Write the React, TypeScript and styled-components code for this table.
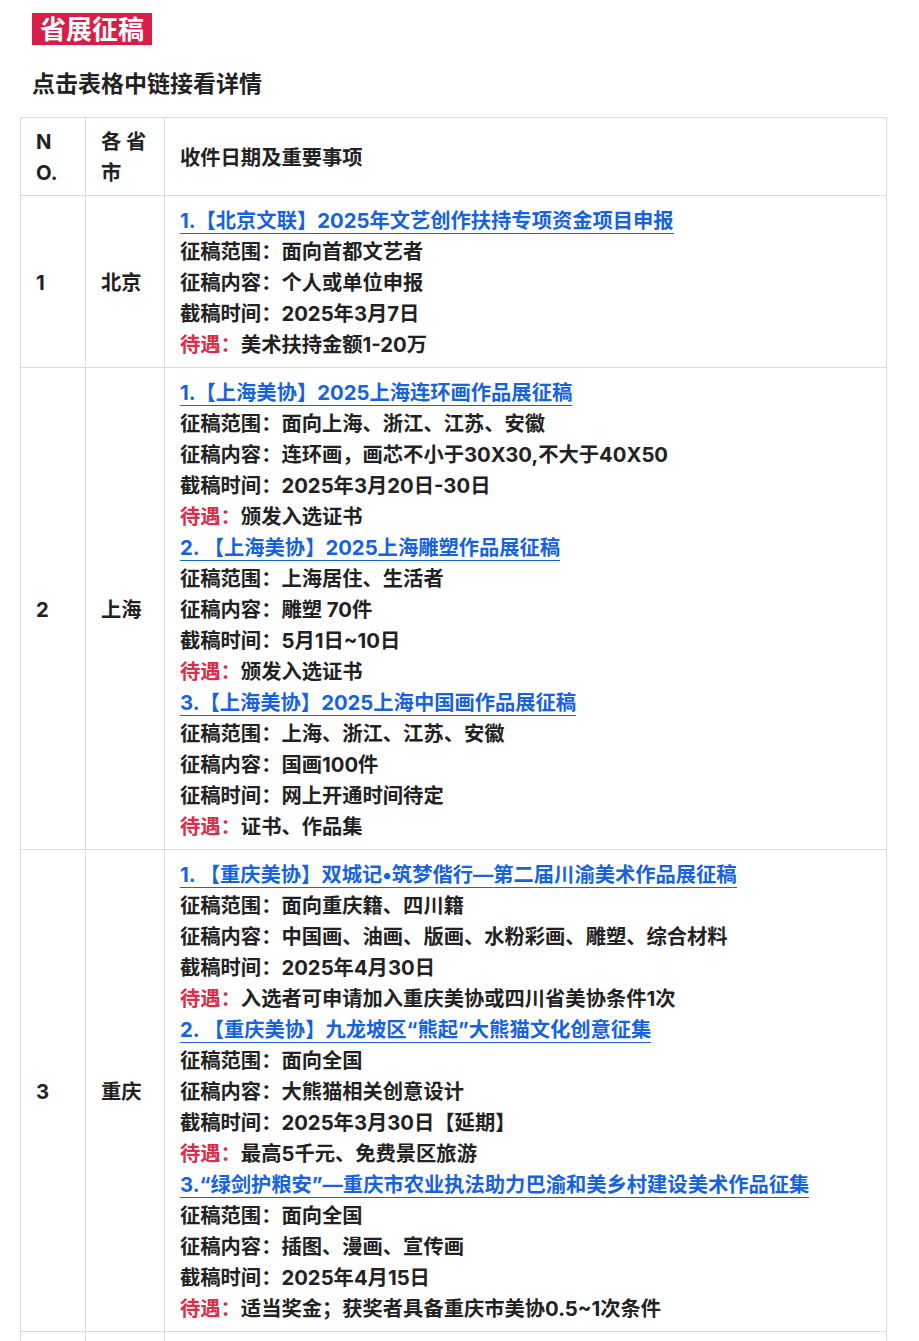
import React from 'react';
import styled, { createGlobalStyle } from 'styled-components';

const GlobalStyle = createGlobalStyle`
  body {
    margin: 0;
    background: #fff;
    font-family: 'Noto Sans', 'Noto Sans CJK SC', sans-serif;
    color: #222;
  }
`;

const Page = styled.div`
  padding: 13px 20px 0;
`;

const Badge = styled.h1`
  display: inline-block;
  margin: 0 0 0 12px;
  padding: 0 8px;
  height: 32px;
  line-height: 32px;
  background: #d81e48;
  color: #fff;
  font-size: 26px;
  font-weight: 700;
`;

const Subtitle = styled.h2`
  margin: 22px 0 0 12px;
  font-size: 23px;
  line-height: 32px;
  font-weight: 700;
  color: #222;
`;

const Table = styled.table`
  margin-top: 18px;
  width: 867px;
  border-collapse: collapse;
  table-layout: fixed;
  font-family: Inter, 'Noto Sans CJK SC', sans-serif;
  font-size: 20.3px;
  font-weight: 700;
  line-height: 31px;
`;

const Cell = styled.td<{ $w?: number; $head?: boolean }>`
  width: ${({ $w }) => ($w ? `${$w}px` : 'auto')};
  border: 1px solid #dcdcdc;
  padding: ${({ $head }) => ($head ? '8px 15px 7px' : '9px 15px 7px')};
  vertical-align: middle;
  text-align: left;
  box-sizing: border-box;
`;

const Line = styled.div`
  white-space: nowrap;
`;

const Link = styled.a`
  color: #1662e0;
  text-decoration: none;
  border-bottom: 1.5px solid #1662e0;
`;

const Label = styled.span`
  color: #d8304c;
`;

type Item = {
  title: string;
  lines: [string, string][];
};

type Row = { no: string; city: string; items: Item[] };

const rows: Row[] = [
  {
    no: '1',
    city: '北京',
    items: [
      {
        title: '1.【北京文联】2025年文艺创作扶持专项资金项目申报',
        lines: [
          ['征稿范围：', '面向首都文艺者'],
          ['征稿内容：', '个人或单位申报'],
          ['截稿时间：', '2025年3月7日'],
          ['待遇：', '美术扶持金额1-20万'],
        ],
      },
    ],
  },
  {
    no: '2',
    city: '上海',
    items: [
      {
        title: '1.【上海美协】2025上海连环画作品展征稿',
        lines: [
          ['征稿范围：', '面向上海、浙江、江苏、安徽'],
          ['征稿内容：', '连环画，画芯不小于30X30,不大于40X50'],
          ['截稿时间：', '2025年3月20日-30日'],
          ['待遇：', '颁发入选证书'],
        ],
      },
      {
        title: '2. 【上海美协】2025上海雕塑作品展征稿',
        lines: [
          ['征稿范围：', '上海居住、生活者'],
          ['征稿内容：', '雕塑 70件'],
          ['截稿时间：', '5月1日~10日'],
          ['待遇：', '颁发入选证书'],
        ],
      },
      {
        title: '3.【上海美协】2025上海中国画作品展征稿',
        lines: [
          ['征稿范围：', '上海、浙江、江苏、安徽'],
          ['征稿内容：', '国画100件'],
          ['征稿时间：', '网上开通时间待定'],
          ['待遇：', '证书、作品集'],
        ],
      },
    ],
  },
  {
    no: '3',
    city: '重庆',
    items: [
      {
        title: '1. 【重庆美协】双城记•筑梦偕行—第二届川渝美术作品展征稿',
        lines: [
          ['征稿范围：', '面向重庆籍、四川籍'],
          ['征稿内容：', '中国画、油画、版画、水粉彩画、雕塑、综合材料'],
          ['截稿时间：', '2025年4月30日'],
          ['待遇：', '入选者可申请加入重庆美协或四川省美协条件1次'],
        ],
      },
      {
        title: '2. 【重庆美协】九龙坡区“熊起”大熊猫文化创意征集',
        lines: [
          ['征稿范围：', '面向全国'],
          ['征稿内容：', '大熊猫相关创意设计'],
          ['截稿时间：', '2025年3月30日【延期】'],
          ['待遇：', '最高5千元、免费景区旅游'],
        ],
      },
      {
        title: '3.“绿剑护粮安”—重庆市农业执法助力巴渝和美乡村建设美术作品征集',
        lines: [
          ['征稿范围：', '面向全国'],
          ['征稿内容：', '插图、漫画、宣传画'],
          ['截稿时间：', '2025年4月15日'],
          ['待遇：', '适当奖金；获奖者具备重庆市美协0.5~1次条件'],
        ],
      },
    ],
  },
];

const EmptyRow = styled.tr`
  height: 120px;
`;

export default function App() {
  return (
    <Page>
      <GlobalStyle />
      <Badge>省展征稿</Badge>
      <Subtitle>点击表格中链接看详情</Subtitle>
      <Table>
        <thead>
          <tr>
            <Cell as="th" $head $w={65}>
              N<br />O.
            </Cell>
            <Cell as="th" $head $w={79}>
              各 省<br />市
            </Cell>
            <Cell as="th" $head>
              收件日期及重要事项
            </Cell>
          </tr>
        </thead>
        <tbody>
          {rows.map((r) => (
            <tr key={r.no}>
              <Cell>{r.no}</Cell>
              <Cell>{r.city}</Cell>
              <Cell>
                {r.items.map((it) => (
                  <React.Fragment key={it.title}>
                    <Line>
                      <Link href="#">{it.title}</Link>
                    </Line>
                    {it.lines.map(([k, v]) => (
                      <Line key={k}>
                        {k === '待遇：' ? <Label>{k}</Label> : k}
                        {v}
                      </Line>
                    ))}
                  </React.Fragment>
                ))}
              </Cell>
            </tr>
          ))}
          <EmptyRow>
            <Cell />
            <Cell />
            <Cell />
          </EmptyRow>
        </tbody>
      </Table>
    </Page>
  );
}
